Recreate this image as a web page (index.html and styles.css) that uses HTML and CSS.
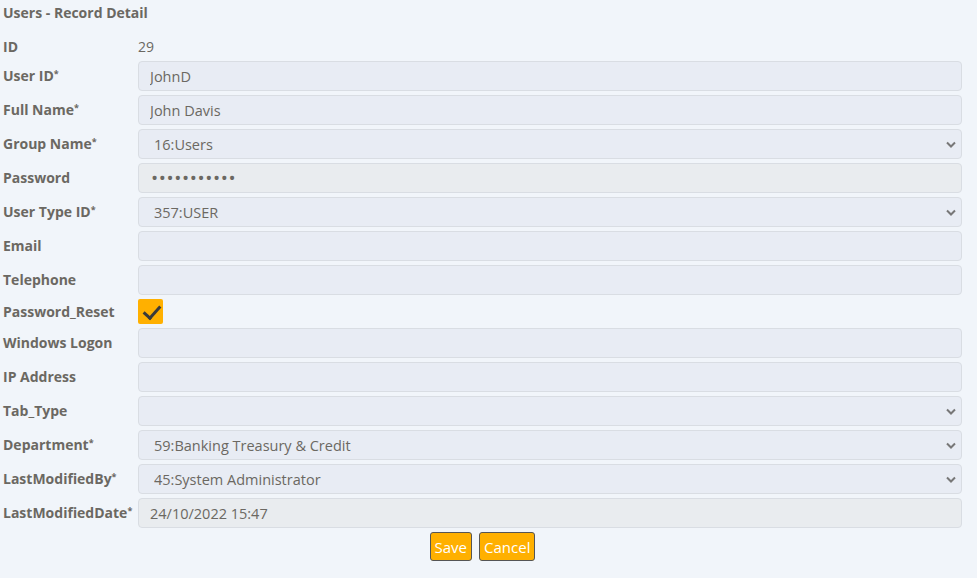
FILE: index.html
```html
<!DOCTYPE html>
<html lang="en">
<head>
    <meta charset="UTF-8">
    <meta name="viewport" content="width=device-width, initial-scale=1.0">
    <title>Users - Record Detail</title>
    <link rel="stylesheet" href="styles.css">
</head>
<body>
    <div class="cont">
        <h1 class="title">Users - Record Detail</h1>

        <form class="record-form">
            <label class="lbl">ID</label>
            <div class="static">29</div>

            <label class="lbl" for="user-id">User ID<sup>*</sup></label>
            <input id="user-id" class="field" type="text" value="JohnD">

            <label class="lbl" for="full-name">Full Name<sup>*</sup></label>
            <input id="full-name" class="field" type="text" value="John Davis">

            <label class="lbl" for="group-name">Group Name<sup>*</sup></label>
            <div class="select-wrap">
                <select id="group-name" class="field">
                    <option>16:Users</option>
                </select>
                <svg class="chevron" width="10" height="7" viewBox="0 0 10 7"><path d="M1 1.5 L5 5.5 L9 1.5" fill="none" stroke="#777" stroke-width="2"/></svg>
            </div>

            <label class="lbl" for="password">Password</label>
            <input id="password" class="field readonly" type="password" value="johndavis12" readonly>

            <label class="lbl" for="user-type">User Type ID<sup>*</sup></label>
            <div class="select-wrap">
                <select id="user-type" class="field">
                    <option>357:USER</option>
                </select>
                <svg class="chevron" width="10" height="7" viewBox="0 0 10 7"><path d="M1 1.5 L5 5.5 L9 1.5" fill="none" stroke="#777" stroke-width="2"/></svg>
            </div>

            <label class="lbl" for="email">Email</label>
            <input id="email" class="field" type="text">

            <label class="lbl" for="telephone">Telephone</label>
            <input id="telephone" class="field" type="text">

            <label class="lbl" for="pw-reset">Password_Reset</label>
            <div class="check-row">
                <input id="pw-reset" class="check" type="checkbox" checked>
            </div>

            <label class="lbl" for="win-logon">Windows Logon</label>
            <input id="win-logon" class="field" type="text">

            <label class="lbl" for="ip-address">IP Address</label>
            <input id="ip-address" class="field" type="text">

            <label class="lbl" for="tab-type">Tab_Type</label>
            <div class="select-wrap">
                <select id="tab-type" class="field">
                    <option></option>
                </select>
                <svg class="chevron" width="10" height="7" viewBox="0 0 10 7"><path d="M1 1.5 L5 5.5 L9 1.5" fill="none" stroke="#777" stroke-width="2"/></svg>
            </div>

            <label class="lbl" for="department">Department<sup>*</sup></label>
            <div class="select-wrap">
                <select id="department" class="field">
                    <option>59:Banking Treasury &amp; Credit</option>
                </select>
                <svg class="chevron" width="10" height="7" viewBox="0 0 10 7"><path d="M1 1.5 L5 5.5 L9 1.5" fill="none" stroke="#777" stroke-width="2"/></svg>
            </div>

            <label class="lbl" for="modified-by">LastModifiedBy<sup>*</sup></label>
            <div class="select-wrap">
                <select id="modified-by" class="field">
                    <option>45:System Administrator</option>
                </select>
                <svg class="chevron" width="10" height="7" viewBox="0 0 10 7"><path d="M1 1.5 L5 5.5 L9 1.5" fill="none" stroke="#777" stroke-width="2"/></svg>
            </div>

            <label class="lbl" for="modified-date">LastModifiedDate<sup>*</sup></label>
            <input id="modified-date" class="field readonly" type="text" value="24/10/2022 15:47" readonly>

            <div class="buttons">
                <button type="button" class="btn">Save</button>
                <button type="button" class="btn">Cancel</button>
            </div>
        </form>
    </div>
</body>
</html>
```

FILE: styles.css
```css
* {
    padding: 0;
    margin: 0;
    box-sizing: border-box;
}

body {
    background-color: #f1f5fa;
    font-family: "Open Sans", "Liberation Sans", sans-serif;
    color: #6b6862;
}

.cont {
    padding: 3px 15px 0 3px;
}

.title {
    font-size: 14px;
    font-weight: 700;
    line-height: 20px;
    margin-bottom: 14px;
}

.record-form {
    display: grid;
    grid-template-columns: 135px 1fr;
    row-gap: 4px;
    align-items: center;
}

.lbl {
    font-size: 14px;
    font-weight: 700;
    white-space: nowrap;
    line-height: 18px;
}

.lbl sup {
    font-size: 9px;
    vertical-align: 4px;
    line-height: 0;
}

.static {
    font-size: 14px;
    line-height: 20px;
}

.field {
    width: 100%;
    height: 30px;
    padding: 0 11px;
    font-family: inherit;
    font-size: 14.5px;
    color: #6b6862;
    background-color: #e8ecf4;
    border: 1px solid #d9dde3;
    border-radius: 4px;
    outline: none;
}

.readonly {
    background-color: #e9ecef;
}

#password {
    font-size: 19px;
    letter-spacing: 0.6px;
    padding-left: 12px;
}

.select-wrap {
    position: relative;
}

.select-wrap select {
    appearance: none;
    padding-left: 15px;
}

.chevron {
    position: absolute;
    right: 6px;
    top: 12px;
}

.check-row {
    height: 25px;
    display: flex;
    align-items: center;
}

.check {
    appearance: none;
    width: 25px;
    height: 25px;
    background-color: #ffb000;
    border-radius: 2px;
    position: relative;
}

.check:checked::after {
    content: "";
    position: absolute;
    left: 9px;
    top: 3px;
    width: 7px;
    height: 14px;
    border-right: 3.5px solid #3a3a3a;
    border-bottom: 3.5px solid #3a3a3a;
    transform: rotate(42deg);
}

.buttons {
    grid-column: 1 / 3;
    display: flex;
    justify-content: center;
    gap: 7px;
}

.btn {
    cursor: pointer;
    height: 29px;
    padding: 0 4px;
    font-family: inherit;
    font-size: 15px;
    color: white;
    background-color: #ffb000;
    border: 1px solid #555;
    border-radius: 3px;
}
```
